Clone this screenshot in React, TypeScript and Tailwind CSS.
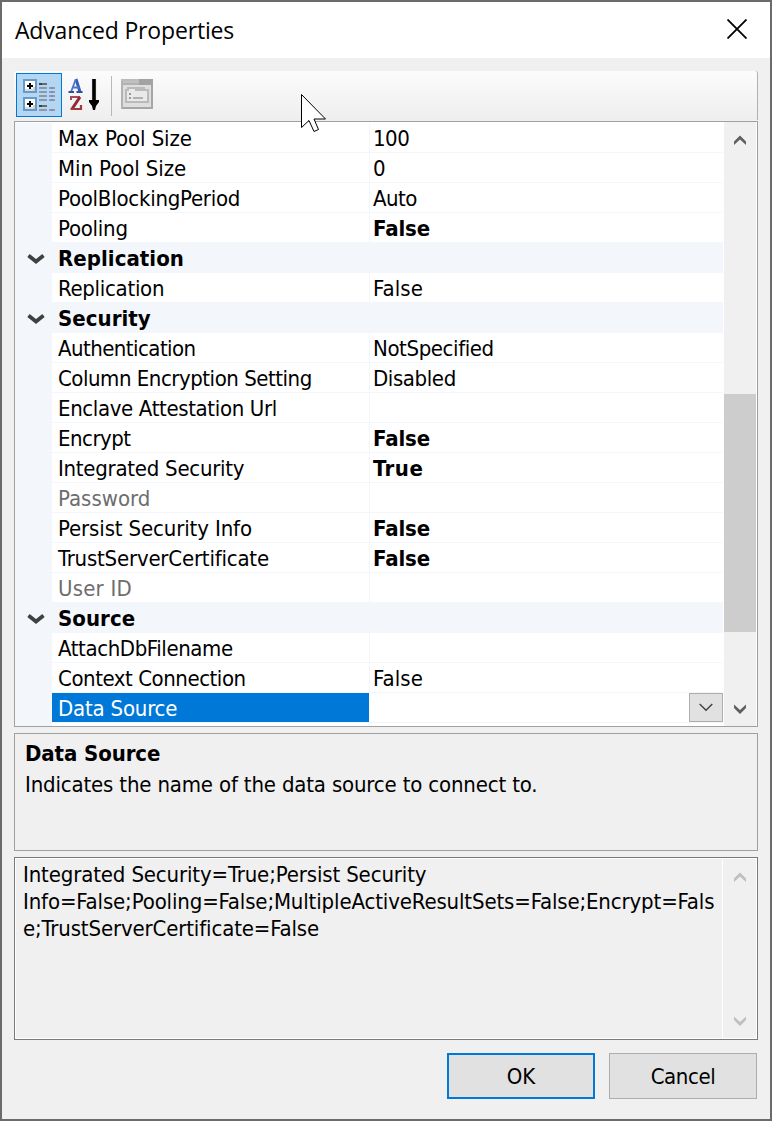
import React from "react";

type Row = {
  kind?: "cat" | "sel";
  name: string;
  value?: string;
  bold?: boolean;
  dim?: boolean;
  nameTrack?: string;
  valueTrack?: string;
};

const rows: Row[] = [
  { name: "Max Pool Size", value: "100", nameTrack: "tracking-[-0.08px]", valueTrack: "tracking-[-0.5px]" },
  { name: "Min Pool Size", value: "0", nameTrack: "tracking-[-0.08px]" },
  { name: "PoolBlockingPeriod", value: "Auto", nameTrack: "tracking-[-0.25px]", valueTrack: "tracking-[-0.5px]" },
  { name: "Pooling", value: "False", bold: true, nameTrack: "tracking-[-0.25px]", valueTrack: "tracking-[-0.1px]" },
  { kind: "cat", name: "Replication" },
  { name: "Replication", value: "False", nameTrack: "tracking-[-0.3px]", valueTrack: "tracking-[0.1px]" },
  { kind: "cat", name: "Security" },
  { name: "Authentication", value: "NotSpecified", nameTrack: "tracking-[-0.55px]", valueTrack: "tracking-[-0.4px]" },
  { name: "Column Encryption Setting", value: "Disabled", nameTrack: "tracking-[-0.47px]", valueTrack: "tracking-[-0.4px]" },
  { name: "Enclave Attestation Url", nameTrack: "tracking-[-0.36px]" },
  { name: "Encrypt", value: "False", bold: true, nameTrack: "tracking-[-0.5px]", valueTrack: "tracking-[-0.1px]" },
  { name: "Integrated Security", value: "True", bold: true, nameTrack: "tracking-[-0.26px]", valueTrack: "tracking-[0.5px]" },
  { name: "Password", dim: true },
  { name: "Persist Security Info", value: "False", bold: true, nameTrack: "tracking-[-0.13px]", valueTrack: "tracking-[-0.1px]" },
  { name: "TrustServerCertificate", value: "False", bold: true, nameTrack: "tracking-[-0.2px]", valueTrack: "tracking-[-0.1px]" },
  { name: "User ID", dim: true, nameTrack: "tracking-[0.2px]" },
  { kind: "cat", name: "Source" },
  { name: "AttachDbFilename", nameTrack: "tracking-[-0.4px]" },
  { name: "Context Connection", value: "False", nameTrack: "tracking-[-0.45px]", valueTrack: "tracking-[0.1px]" },
  { kind: "sel", name: "Data Source", nameTrack: "tracking-[-0.2px]" },
];

function Chevron({ up, color, className }: { up?: boolean; color: string; className?: string }) {
  return (
    <svg width="12" height="10" viewBox="0 0 12 10" className={className}>
      <path
        d={up ? "M0 6.5 L6 0.5 L12 6.5 V10 L6 4.5 L0 10 Z" : "M0 0.5 L6 6 L12 0.5 V4 L6 10 L0 4 Z"}
        fill={color}
      />
    </svg>
  );
}

function PropertyRow({ row }: { row: Row }) {
  if (row.kind === "cat") {
    return (
      <div className="flex h-[30px] items-center bg-[#f3f7fc]">
        <div className="flex w-[37px] pt-px pl-[12px]">
          <svg width="18" height="12" viewBox="0 0 18 12">
            <path d="M1.5 2.5 L9 8.5 L16.5 2.5" fill="none" stroke="#404040" strokeWidth="3.8" />
          </svg>
        </div>
        <div className="pt-px pl-[6px] leading-[32px] font-bold tracking-[0.05px]">{row.name}</div>
      </div>
    );
  }
  const sel = row.kind === "sel";
  return (
    <div className="flex h-[30px]">
      <div className="w-[37px] shrink-0 bg-[#f3f7fc]" />
      <div className="flex flex-1 border-b border-[#f3f7fc]">
        <div
          className={
            "w-[317px] shrink-0 pl-[6px] leading-[31px] " +
            (sel ? "bg-[#0078d7] text-white " : row.dim ? "text-[#6d6d6d] " : "") +
            (row.nameTrack ?? "")
          }
        >
          {row.name}
        </div>
        <div
          className={
            "flex flex-1 justify-between border-l pl-[3px] leading-[31px] " +
            (sel ? "border-white " : "border-[#f3f7fc] ") +
            (row.bold ? "font-bold " : "") +
            (row.valueTrack ?? "")
          }
        >
          <span>{row.value}</span>
          {sel && (
            <button className="flex h-[29px] w-[34px] items-center justify-center border border-[#adadad] bg-[#e1e1e1]">
              <svg width="14" height="9" viewBox="0 0 14 9">
                <path d="M0.7 1 L7 7.3 L13.3 1" fill="none" stroke="#404040" strokeWidth="1.4" />
              </svg>
            </button>
          )}
        </div>
      </div>
    </div>
  );
}

function CategorizedIcon() {
  const box = (y: number) => (
    <g key={y}>
      <rect x="1" y={y} width="12" height="12" fill="#fff" stroke="#6699cc" strokeWidth="2" />
      <rect x="2" y={y + 9} width="10" height="2" fill="#dcdcd8" />
      <rect x="10" y={y + 7} width="2" height="4" fill="#d9d3b5" />
      <path d={`M7 ${y + 3}v6M4 ${y + 6}h6`} stroke="#000" strokeWidth="2" />
    </g>
  );
  return (
    <svg width="32" height="32" viewBox="0 0 32 32" shapeRendering="crispEdges">
      {box(1)}
      {box(19)}
      {[4, 26].map((y) => (
        <g key={y}>
          <rect x="16" y={y} width="8" height="2" fill="#6a6a6a" />
          <rect x="16" y={y} width="3" height="2" fill="#404040" />
        </g>
      ))}
      {[8, 12, 16, 20, 30].map((y) => (
        <g key={y}>
          <rect x="16" y={y} width="8" height="2" fill="#9a93b5" />
          <rect x="18" y={y} width="4" height="2" fill="#7c9fa6" />
          <rect x="26" y={y} width="6" height="2" fill="#9a93b5" />
          <rect x="28" y={y} width="2" height="2" fill="#6b98b0" />
        </g>
      ))}
    </svg>
  );
}

function SortIcon() {
  return (
    <svg className="mt-[5px] ml-[6px]" width="32" height="34" viewBox="0 0 32 34">
      <path d="M8 1 L12 14" fill="none" stroke="#3560bd" strokeWidth="3" />
      <path d="M7.5 2 L3 14 M4.5 9.5 H11" fill="none" stroke="#4a76c8" strokeWidth="1.8" />
      <path d="M0.5 14 h5.5 M8.5 14 h6" fill="none" stroke="#2c4f9e" strokeWidth="2" />
      <path d="M3 22 V19 H12" fill="none" stroke="#a64b55" strokeWidth="2" />
      <path d="M12 19 L4 31" fill="none" stroke="#8e2a33" strokeWidth="3" />
      <path d="M2.5 31 H13 V27" fill="none" stroke="#a3393c" strokeWidth="2.2" />
      <path d="M26 1 V24" stroke="#e2e2e2" strokeWidth="5" />
      <path d="M24.2 1 h3.6 V22 H31 V24 L28 28 L27 32 H25 L24 28 L21 24 V22 H24.2 Z" fill="#000" />
    </svg>
  );
}

function PagesIcon() {
  return (
    <svg className="mt-[6px] ml-[9px]" width="32" height="30" viewBox="0 0 32 30" shapeRendering="crispEdges">
      <rect width="32" height="30" fill="#b2b2b2" />
      <rect x="0" y="0" width="32" height="2" fill="#bcbcbc" />
      <rect x="18" y="0" width="14" height="6" fill="#a3a3a3" />
      <rect x="2" y="2" width="16" height="2" fill="#c0c0c0" />
      <rect x="2" y="6" width="28" height="22" fill="#dedede" />
      <path d="M5 23 V11 H7 V9 H15 V11 H27 V23 Z" fill="#e9e9e9" stroke="#bababa" strokeWidth="2" />
      <path d="M16 9 H24" stroke="#bababa" strokeWidth="2" />
      <rect x="8" y="14" width="2" height="2" fill="#999" />
      <rect x="8" y="18" width="2" height="2" fill="#999" />
      <rect x="12" y="18" width="10" height="2" fill="#b0b0b0" />
      <rect x="30" y="6" width="2" height="24" fill="#a6a6a6" />
      <rect x="2" y="28" width="30" height="2" fill="#a6a6a6" />
    </svg>
  );
}

export default function App() {
  return (
    <div className="relative flex h-[1121px] w-[772px] flex-col border-2 border-[#6b6b6b] bg-[#f0f0f0] font-['DejaVu_Sans_Condensed','DejaVu_Sans',sans-serif] text-[22px] [font-stretch:condensed] text-black [font-variant-ligatures:none]">
      <header className="flex h-[56px] items-center justify-between bg-white pr-[23px] pl-[13px]">
        <h1 className="mt-px font-['Open_Sans',sans-serif] text-[23px] tracking-[-0.17px] [font-stretch:normal]">
          Advanced Properties
        </h1>
        <svg className="-mt-[2px]" width="20" height="20" viewBox="0 0 20 20">
          <path d="M0.5 0.5 L19.5 19.5 M19.5 0.5 L0.5 19.5" stroke="#000" strokeWidth="1.8" />
        </svg>
      </header>

      <div className="mx-3 mt-[13px] flex h-[49px] items-start rounded-t-[3px] border-r border-[#b0b0b0] bg-linear-to-b from-[#fcfcfc] to-[#eeeeee] pt-[2px] pl-[2px]">
        <button className="flex h-[44px] w-[46px] items-center justify-center border border-[#0078d7] bg-[#b3d7f3]">
          <CategorizedIcon />
        </button>
        <SortIcon />
        <div className="mt-[3px] ml-[11px] h-[40px] w-px bg-[#b8b8b8]" />
        <PagesIcon />
      </div>

      <main className="mx-3 mt-px flex h-[606px] border border-[#a0a0a0] bg-white pr-px">
        <div className="flex w-[709px] flex-col bg-white">
          <div className="h-px" />
          <div className="w-[708px]">
            {rows.map((r, i) => (
              <PropertyRow key={i} row={r} />
            ))}
          </div>
          <div className="w-[37px] flex-1 bg-[#f3f7fc]" />
        </div>
        <div className="flex w-[32px] flex-col items-center bg-[#f0f0f0]">
          <Chevron up color="#606060" className="mt-[13px]" />
          <div className="mt-[249px] h-[238px] w-full bg-[#cdcdcd]" />
          <Chevron color="#606060" className="mt-[72px]" />
        </div>
      </main>

      <section className="mx-3 mt-[6px] h-[118px] border border-[#a0a0a0] px-[10px]">
        <h2 className="mt-[5px] leading-[30px] font-bold tracking-[-0.1px]">Data Source</h2>
        <p className="leading-[32px] tracking-[-0.17px]">Indicates the name of the data source to connect to.</p>
      </section>

      <section className="mx-3 mt-[6px] h-[183px] border border-[#7a7a7a]">
        <div className="flex h-full border border-white">
          <div className="flex-1 pt-[2px] pl-[7px] leading-[27px] tracking-[-0.14px] whitespace-nowrap">
            Integrated Security=True;Persist Security
            <br />
            Info=False;Pooling=False;MultipleActiveResultSets=False;Encrypt=Fals
            <br />
            e;TrustServerCertificate=False
          </div>
          <div className="flex w-[34px] flex-col items-center justify-between border-l border-white pt-[13px] pb-[12px]">
            <Chevron up color="#bfbfbf" />
            <Chevron color="#bfbfbf" />
          </div>
        </div>
      </section>

      <footer className="mt-[13px] mr-[13px] flex justify-end gap-[14px]">
        <button className="h-[46px] w-[148px] border-2 border-[#0078d7] bg-[#e1e1e1] pt-px">OK</button>
        <button className="h-[46px] w-[148px] border border-[#adadad] bg-[#e1e1e1] pt-px tracking-[-0.4px]">Cancel</button>
      </footer>

      <svg className="absolute top-[92px] left-[299px]" width="26" height="40" viewBox="0 0 26 40">
        <path d="M0.5 0.5 V33.5 L8 26.5 L13 37.5 L17.5 35.5 L13 25 H24.5 Z" fill="#fff" stroke="#000" strokeWidth="1" />
      </svg>
    </div>
  );
}
